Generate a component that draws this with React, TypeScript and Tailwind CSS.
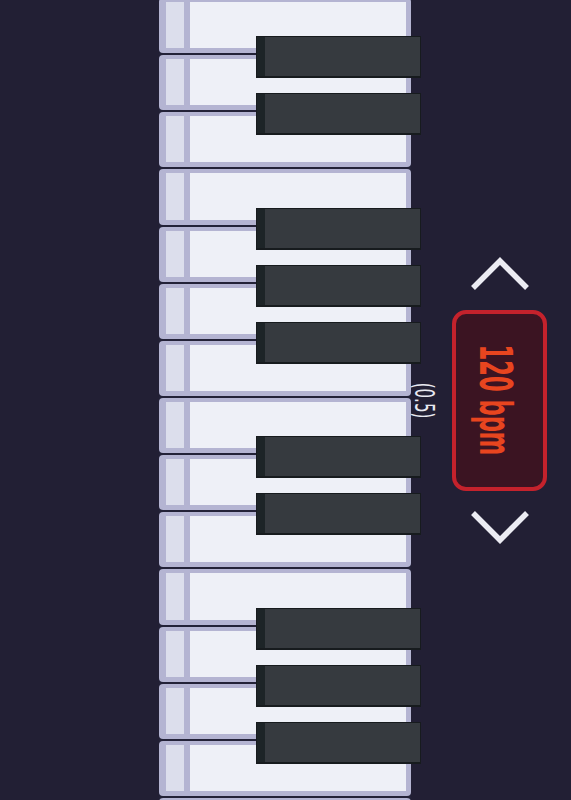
import React from "react";

const PITCH = 57.15;
const WHITE_COUNT = 15;
// black keys sit on the seam after these white keys
const BLACK_AFTER = [0, 1, 3, 4, 5, 7, 8, 10, 11, 12];

const font = { fontFamily: '"DejaVu Sans Condensed", "DejaVu Sans", sans-serif' };

const Chevron: React.FC<{ up?: boolean }> = ({ up }) => (
  <svg width="62" height="36" viewBox="0 0 62 36" fill="none">
    <polyline
      points={up ? "4,32 31,5 58,32" : "4,4 31,31 58,4"}
      stroke="#ececf3"
      strokeWidth="5.5"
      strokeLinejoin="miter"
    />
  </svg>
);

const WhiteKey: React.FC = () => (
  <div className="flex h-[55.15px] shrink-0 gap-[6px] rounded-[4px] bg-[#b4b4d2] pt-[4px] pr-[5.5px] pb-[5px] pl-[7px]">
    <div className="w-[18px] bg-[#dcdeec]" />
    <div className="flex-1 bg-[#eef0f7]" />
  </div>
);

const App: React.FC = () => {
  return (
    <div className="flex h-[800px] w-full overflow-hidden bg-[#221f34]" style={font}>
      {/* Piano */}
      <div className="relative ml-[159px] w-[252px] shrink-0">
        <div className="-mt-[2px] flex flex-col gap-[2px] bg-[#232238]">
          {Array.from({ length: WHITE_COUNT }).map((_, i) => (
            <WhiteKey key={i} />
          ))}
        </div>
        {BLACK_AFTER.map((k) => (
          <div
            key={k}
            className="absolute left-[97px] z-10 flex h-[42px] w-[165px] border border-b-2 border-[#171b1e] bg-[#363a3f]"
            style={{ top: -2 + (k + 1) * PITCH - 19 }}
          >
            <div className="w-[8px] bg-[#1d2427]" />
          </div>
        ))}
      </div>

      {/* Step label */}
      <div className="flex w-[28px] shrink-0 items-center justify-center">
        <span className="block rotate-90 scale-x-[0.62] whitespace-nowrap text-[27px] leading-none text-[#e8e8f0]">
          (0.5)
        </span>
      </div>

      {/* Tempo controls */}
      <div className="ml-[13px] flex w-[95px] shrink-0 flex-col items-center justify-center gap-[20px]">
        <button className="flex h-[32px] items-center justify-center">
          <Chevron up />
        </button>
        <div className="flex h-[181px] w-[95px] items-center justify-center rounded-[14px] border-4 border-[#c4222c] bg-[#3b1422]">
          <span className="mr-[8px] block rotate-90 scale-x-[0.57] whitespace-nowrap text-[44px] font-bold leading-none text-[#e8451f]">
            120 bpm
          </span>
        </div>
        <button className="flex h-[32px] items-center justify-center">
          <Chevron />
        </button>
      </div>
    </div>
  );
};

export default App;
